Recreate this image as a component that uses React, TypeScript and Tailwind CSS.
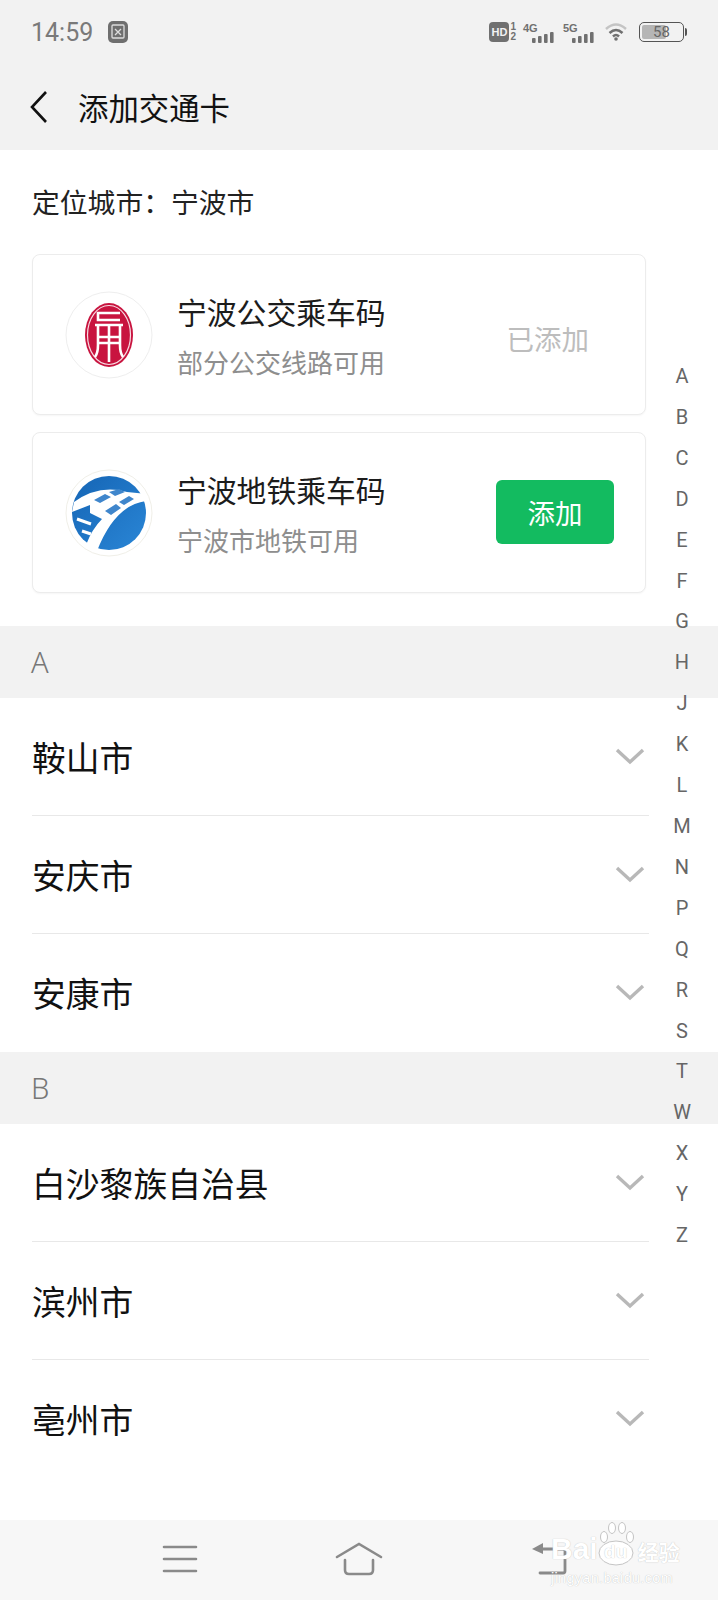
const INDEX = 'ABCDEFGHJKLMNPQRSTWXYZ'.split('');

const SECTIONS = [
  { letter: 'A', cities: ['鞍山市', '安庆市', '安康市'] },
  { letter: 'B', cities: ['白沙黎族自治县', '滨州市', '亳州市'] },
];

const SealLogo = () => (
  <svg viewBox="0 0 88 88" className="h-[88px] w-[88px]">
    <circle cx="44" cy="44" r="43" fill="#fff" stroke="#eeeeee" strokeWidth="1" />
    <ellipse cx="44" cy="44" rx="24" ry="32" fill="#c8143f" />
    <ellipse cx="44" cy="44" rx="21.5" ry="29.5" fill="none" stroke="#f7dbe2" strokeWidth="1.2" />
    <g fill="none" stroke="#fff" strokeWidth="2.6">
      <path d="M55 22H33v7h22" />
      <path d="M30 34h28M33 34v20q0 8-3 12M55 34v20q0 8 3 12M44 34v37M33 46h22M33 52h22" />
    </g>
  </svg>
);

const MetroLogo = () => (
  <svg viewBox="0 0 88 88" className="h-[88px] w-[88px]">
    <defs>
      <linearGradient id="metro" x1="0" y1="0" x2="1" y2="1">
        <stop offset="0" stopColor="#1565b5" />
        <stop offset="1" stopColor="#2a86d6" />
      </linearGradient>
    </defs>
    <circle cx="44" cy="44" r="43" fill="#fff" stroke="#f0efe8" strokeWidth="1" />
    <circle cx="44" cy="44" r="37" fill="url(#metro)" />
    <path
      d="M9 33Q34 15 62 23L82 25L81 32Q50 36 32 82L21 76Q27 60 37 50L25 44L25 36L7 43Z"
      fill="#fff"
    />
    <path d="M12 50l14 5M17 62l9 3" stroke="#fff" strokeWidth="3" fill="none" />
    <path d="M29 31l11-6 6 3-11 6zM44 23l10-3 6 3-10 4zM54 33l10-6 5 3-10 6zM40 42l11-7 5 4-10 7z" fill="#3f86cc" />
  </svg>
);

const SignalBars = () => (
  <svg viewBox="0 0 23 11" className="h-[11px] w-[23px]" fill="#707070">
    <rect x="0" y="6" width="3.6" height="5" rx="1" />
    <rect x="6" y="4" width="3.6" height="7" rx="1" />
    <rect x="12" y="2" width="3.6" height="9" rx="1" />
    <rect x="18" y="0" width="3.6" height="11" rx="1" />
  </svg>
);

const Chevron = () => (
  <svg viewBox="0 0 30 18" className="h-[18px] w-[30px]" fill="none" stroke="#b8b8b8" strokeWidth="3.4">
    <path d="M2 3l13 12L28 3" />
  </svg>
);

const StatusBar = () => (
  <div className="flex h-[64px] items-center justify-between pl-[31px] pr-[31px]">
    <div className="flex items-center gap-[15px]">
      <span className="font-['Roboto',sans-serif] text-[25px] leading-none text-[#7a7a7a]">14:59</span>
      <svg viewBox="0 0 20 22" className="h-[22px] w-[20px]">
        <rect width="20" height="22" rx="5" fill="#6f6f6f" />
        <rect x="4" y="4" width="12" height="13" rx="1" fill="none" stroke="#ddd" strokeWidth="1.3" />
        <path d="M7 8l6 6M13 8l-6 6" stroke="#ddd" strokeWidth="1.3" />
      </svg>
    </div>
    <div className="flex items-center">
      <div className="flex items-center gap-[1px]">
        <span className="flex h-[20px] w-[20px] items-center justify-center rounded-[4px] bg-[#707070] font-['Liberation_Sans',sans-serif] text-[11px] font-bold text-[#f2f2f2]">HD</span>
        <span className="flex flex-col font-['Liberation_Sans',sans-serif] text-[10px] font-bold leading-[10px] text-[#707070]">
          <span>1</span>
          <span>2</span>
        </span>
      </div>
      <div className="ml-[7px] flex w-[34px] items-start">
        <span className="font-['Liberation_Sans',sans-serif] text-[11px] font-bold leading-[12px] text-[#707070]">4G</span>
        <span className="-ml-[6px] mt-[10px]"><SignalBars /></span>
      </div>
      <div className="ml-[6px] flex w-[34px] items-start">
        <span className="font-['Liberation_Sans',sans-serif] text-[11px] font-bold leading-[12px] text-[#707070]">5G</span>
        <span className="-ml-[6px] mt-[10px]"><SignalBars /></span>
      </div>
      <svg viewBox="0 0 22 18" className="ml-[8px] h-[18px] w-[22px]" fill="none">
        <path d="M1 6q10-9 20 0" stroke="#c4c4c4" strokeWidth="2.5" />
        <path d="M4.5 10q6.500-6 13 0" stroke="#707070" strokeWidth="2.5" />
        <path d="M8 13.500q3-3 6 0" stroke="#707070" strokeWidth="2.5" />
        <circle cx="11" cy="16" r="1.800" fill="#707070" />
      </svg>
      <div className="ml-[12px] flex items-center">
        <div className="relative flex h-[20px] w-[45px] items-center justify-center overflow-hidden rounded-[5px] border border-[#555]">
          <span className="absolute bottom-[2px] left-[2px] top-[2px] w-[24px] rounded-[2px] bg-[#b5b5b5]" />
          <span className="relative font-['Roboto',sans-serif] text-[15px] leading-none text-[#666]">58</span>
        </div>
        <span className="ml-[1px] h-[8px] w-[2px] rounded-r-sm bg-[#555]" />
      </div>
    </div>
  </div>
);

const Card = ({
  logo,
  title,
  sub,
  action,
}: {
  logo: React.ReactNode;
  title: string;
  sub: string;
  action: React.ReactNode;
}) => (
  <div className="flex h-[161px] w-[614px] items-center rounded-[8px] border border-[#ececec] bg-white pl-[32px] pr-[31px] shadow-[0_1px_2px_rgba(0,0,0,0.04)]">
    {logo}
    <div className="ml-[24px] mt-[2px] flex-1">
      <div className="text-[29.800px] leading-[40px] text-[#1c1c1c]">{title}</div>
      <div className="mt-[13px] text-[26px] leading-[36px] text-[#8e8e8e]">{sub}</div>
    </div>
    {action}
  </div>
);

const CityRow = ({ name, last }: { name: string; last: boolean }) => (
  <div className={`flex h-[118px] w-[617px] items-center justify-between ${last ? '' : 'border-b border-[#e8e8e8]'}`}>
    <span className="text-[33.800px] leading-none text-[#111]">{name}</span>
    <span className="mr-[4px] mt-[-2px]"><Chevron /></span>
  </div>
);

export default function App() {
  return (
    <div className="relative h-[1600px] w-[718px] overflow-hidden bg-white font-['Noto_Sans_CJK_SC',sans-serif]">
      {/* Header */}
      <div className="h-[150px] bg-[#f2f2f2]">
        <StatusBar />
        <div className="flex h-[86px] items-center pl-[29px]">
          <svg viewBox="0 0 20 34" className="h-[34px] w-[20px]" fill="none" stroke="#111" strokeWidth="2.6">
            <path d="M17 2L3 17l14 15" />
          </svg>
          <span className="ml-[29px] text-[30.400px] leading-none text-[#111]">添加交通卡</span>
        </div>
      </div>

      {/* Located city + cards */}
      <div className="px-[32px] pb-[33px]">
        <div className="flex h-[104px] items-center text-[27.800px] leading-none text-[#222]">定位城市：宁波市</div>
        <div className="flex flex-col gap-[17px]">
          <Card
            logo={<SealLogo />}
            title="宁波公交乘车码"
            sub="部分公交线路可用"
            action={<span className="mr-[25px] mt-[8px] text-[27.500px] text-[#bdbdbd]">已添加</span>}
          />
          <Card
            logo={<MetroLogo />}
            title="宁波地铁乘车码"
            sub="宁波市地铁可用"
            action={
              <button className="mb-[2px] flex h-[64px] w-[118px] items-center justify-center rounded-[6px] bg-[#13bb60] pt-[2px] text-[27.500px] text-white">
                添加
              </button>
            }
          />
        </div>
      </div>

      {/* City list */}
      {SECTIONS.map((s) => (
        <div key={s.letter}>
          <div className="flex h-[72px] items-center bg-[#f2f2f2] pl-[31px] font-['Noto_Sans',sans-serif] text-[29px] font-light text-[#777]">
            {s.letter}
          </div>
          <div className="pl-[32px]">
            {s.cities.map((c, j) => (
              <CityRow key={c} name={c} last={j === s.cities.length - 1} />
            ))}
          </div>
        </div>
      ))}

      {/* Alphabet index */}
      <div className="absolute left-[662px] top-[356px] flex w-[40px] flex-col items-center font-['Roboto',sans-serif] text-[20px] leading-[40.900px] text-[#666]">
        {INDEX.map((l) => (
          <span key={l}>{l}</span>
        ))}
      </div>

      {/* Nav bar */}
      <div className="absolute inset-x-0 bottom-0 flex h-[80px] items-center bg-[#f7f7f7] pb-[2px]">
        <svg viewBox="0 0 36 30" className="ml-[162px] h-[30px] w-[36px]" fill="none" stroke="#8a8a8a" strokeWidth="2.600" strokeLinecap="round">
          <path d="M2 3h32M2 15h32M2 27h32" />
        </svg>
        <svg viewBox="0 0 48 34" className="ml-[137px] h-[34px] w-[48px]" fill="none" stroke="#8a8a8a" strokeWidth="2.600" strokeLinecap="round">
          <path d="M2 15L24 2l22 13M10 18v10q0 4 4 4h20q4 0 4-4V18" />
        </svg>
        <svg viewBox="0 0 36 34" className="ml-[148px] h-[34px] w-[36px]" fill="none" stroke="#8a8a8a" strokeWidth="2.800" strokeLinecap="round">
          <path d="M6 7h26q2 0 2 2v20q0 2-2 2H9" />
          <path d="M1 7l11-6v11z" fill="#8a8a8a" stroke="none" />
        </svg>
      </div>

      {/* Baidu watermark */}
      <div className="absolute left-[551px] top-[1522px] flex flex-col font-['Liberation_Sans',sans-serif] text-white [text-shadow:0_0_1px_#b5b5b5]">
        <div className="flex items-end">
          <span className="text-[30px] font-bold leading-[34px]">Bai</span>
          <div className="relative -ml-[1px] h-[44px] w-[38px]">
            <svg viewBox="0 0 38 44" className="h-[44px] w-[38px]" fill="#fff" stroke="#c4c4c4" strokeWidth="1">
              <ellipse cx="19" cy="31" rx="17" ry="12" />
              <ellipse cx="7" cy="15" rx="3.500" ry="5.500" />
              <ellipse cx="15" cy="6" rx="3.500" ry="5.500" />
              <ellipse cx="25" cy="6" rx="3.500" ry="5.500" />
              <ellipse cx="33" cy="15" rx="3.500" ry="5.500" />
            </svg>
            <span className="absolute inset-x-0 bottom-[5px] text-center text-[19px] font-bold leading-none">du</span>
          </div>
          <span className="ml-[3px] font-['Noto_Sans_CJK_SC',sans-serif] text-[21px] font-bold leading-[30px]">经验</span>
        </div>
        <span className="mt-[5px] text-[14.500px] leading-[14px] tracking-[0.3px]">jingyan.baidu.com</span>
      </div>
    </div>
  );
}
